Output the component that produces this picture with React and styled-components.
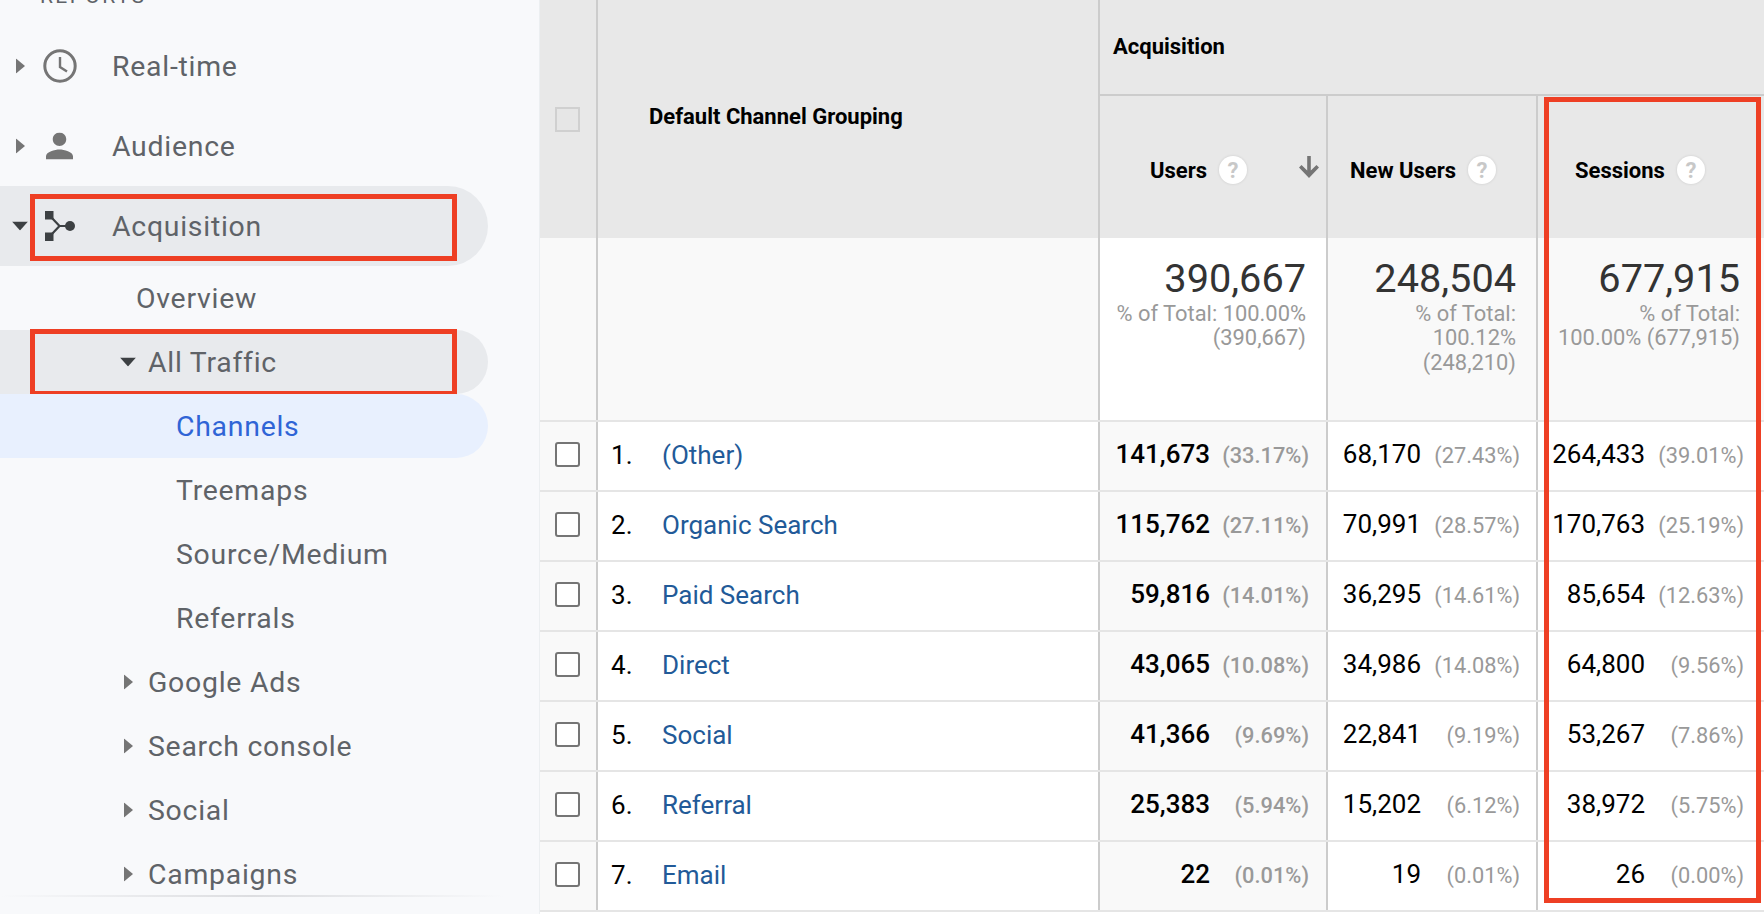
import React from "react";
import styled, { createGlobalStyle } from "styled-components";

const GlobalStyle = createGlobalStyle`
  html, body {
    margin: 0;
    padding: 0;
    height: 914px;
    overflow: hidden;
    background: #fff;
    font-family: Roboto, "Liberation Sans", sans-serif;
  }
`;

const Page = styled.div`
  position: relative;
  display: flex;
  width: 1764px;
  height: 914px;
  overflow: hidden;
`;

const Sidebar = styled.nav`
  position: relative;
  width: 539px;
  flex: none;
  overflow: hidden;
  background: #f8f9fb;
  color: #5f6368;
  font-family: Roboto, sans-serif;
  font-size: 28.4px;
  letter-spacing: 0.75px;
`;

const SectionLabel = styled.div`
  height: 20px;
  margin: -14px 0 20px 40px;
  font-size: 21px;
  line-height: 20px;
  letter-spacing: 2.4px;
`;

const NavRow = styled.div`
  position: relative;
  display: flex;
  align-items: center;
  height: ${(p) => (p.$tall ? 80 : 64)}px;
  width: 488px;
  box-sizing: border-box;
  padding-left: ${(p) => p.$indent}px;
  border-radius: 0 40px 40px 0;
  background: ${(p) => p.$bg || "transparent"};
  color: ${(p) => p.$color || "inherit"};
`;

const Caret = styled.svg`
  position: absolute;
  left: ${(p) => p.$left}px;
  top: 50%;
  transform: translateY(-50%);
  fill: ${(p) => p.$fill || "#757575"};
`;

const NavIcon = styled.svg`
  position: absolute;
  left: ${(p) => p.$left}px;
  top: 50%;
  transform: translateY(-50%);
`;

const RedBox = styled.div`
  position: absolute;
  left: ${(p) => p.$left}px;
  top: ${(p) => p.$top}px;
  width: ${(p) => p.$width}px;
  height: ${(p) => p.$height}px;
  box-sizing: border-box;
  border: 5px solid #ee3f24;
  pointer-events: none;
`;

const SidebarFade = styled.div`
  position: absolute;
  left: 0;
  bottom: 17px;
  width: 504px;
  height: 2px;
  background: linear-gradient(90deg, transparent, #dcdde0 50%, transparent);
`;

const TableArea = styled.div`
  flex: 1;
  min-width: 0;
  border-left: 1px solid #eceff1;
  font-size: 26px;
  color: #000;
`;

const columns = "58px 502px 228px 210px 1fr";

const HeadGrid = styled.div`
  display: grid;
  grid-template-columns: ${columns};
  grid-template-rows: 96px 142px;
  height: 238px;
  background: #e8e8e8;
  font-size: 22px;
  font-weight: 700;
`;

const HeadCell = styled.div`
  position: relative;
  display: flex;
  align-items: center;
  box-sizing: border-box;
  grid-row: ${(p) => p.$row || "auto"};
  grid-column: ${(p) => p.$col || "auto"};
  padding-left: ${(p) => p.$pad || 0}px;
  border-right: ${(p) => (p.$last ? "none" : "2px solid #ccc")};
  border-bottom: ${(p) => (p.$ruled ? "2px solid #ccc" : "none")};
`;

const HeadCheck = styled.span`
  width: 25px;
  height: 25px;
  margin: 1px 0 0 15px;
  box-sizing: border-box;
  border: 2px solid #d0d0d0;
  background: #e6e6e6;
`;

const HeadTitle = styled.span`
  margin-top: ${(p) => p.$shift || 0}px;
`;

const ColumnHead = styled.span`
  display: flex;
  align-items: center;
  margin-top: 6px;
`;

const HelpDot = styled.span`
  display: inline-flex;
  align-items: center;
  justify-content: center;
  width: 28px;
  height: 28px;
  margin-left: 12px;
  border-radius: 50%;
  background: #fff;
  box-shadow: 0 0 3px rgba(0, 0, 0, 0.12);
  color: #c8c8c8;
  font-size: 22px;
  font-weight: 700;
`;

const SortArrow = styled.svg`
  position: absolute;
  right: 7px;
  top: 60px;
  fill: #757575;
`;

const DataRow = styled.div`
  display: grid;
  grid-template-columns: ${columns};
  height: ${(p) => p.$height}px;
  box-sizing: border-box;
  border-bottom: 2px solid #e5e5e5;
`;

const Cell = styled.div`
  display: flex;
  align-items: center;
  box-sizing: border-box;
  padding-bottom: ${(p) => p.$lift || 0}px;
  background: ${(p) => (p.$shade ? "#f9f9f9" : "#fff")};
  border-right: ${(p) => (p.$last ? "none" : "2px solid #ccc")};
`;

const TotalCell = styled(Cell)`
  display: block;
  padding: 18px ${(p) => p.$pad}px 0 0;
  text-align: right;
`;

const TotalValue = styled.div`
  font-size: 39.7px;
  line-height: 46px;
  color: #333;
`;

const TotalNote = styled.div`
  font-size: 21.9px;
  line-height: 24.3px;
  color: #999;
`;

const RowCheck = styled.span`
  width: 25px;
  height: 25px;
  margin: -4px 0 0 15px;
  box-sizing: border-box;
  border: 2px solid #757575;
  border-radius: 3px;
  background: #fff;
`;

const RowIndex = styled.span`
  width: 51px;
  margin-left: 13px;
  color: #000;
`;

const ChannelLink = styled.a`
  color: #225a98;
  text-decoration: none;
`;

const MetricCell = styled(Cell)`
  align-items: baseline;
  justify-content: flex-end;
  padding: 17px ${(p) => p.$pad}px 0 0;
  font-weight: ${(p) => (p.$strong ? 500 : 400)};
`;

const Percent = styled.span`
  width: 99px;
  flex: none;
  text-align: right;
  font-size: 21.8px;
  color: #999;
`;

const ClockIcon = () => (
  <NavIcon $left={43} width="34" height="34" viewBox="0 0 34 34" fill="none" stroke="#757575" strokeWidth="3">
    <circle cx="17" cy="17" r="15.2" />
    <path d="M17 8v10l7 4.5" strokeWidth="2.4" />
  </NavIcon>
);

const PersonIcon = () => (
  <NavIcon $left={46} width="27" height="27" viewBox="4 4 16 16" fill="#757575">
    <path d="M12 12c2.21 0 4-1.79 4-4s-1.79-4-4-4-4 1.79-4 4 1.79 4 4 4zm0 2c-2.67 0-8 1.34-8 4v2h16v-2c0-2.66-5.33-4-8-4z" />
  </NavIcon>
);

const AcquisitionIcon = () => (
  <NavIcon $left={45} width="30" height="30" viewBox="0 0 30 30" fill="#3c4043" stroke="none">
    <rect x="0" y="0" width="8.5" height="8.5" />
    <rect x="0" y="21.5" width="8.5" height="8.5" />
    <circle cx="25" cy="15" r="5" />
    <path d="M6 6l8.5 9L6 24M14 15h9" fill="none" stroke="#3c4043" strokeWidth="2.2" />
  </NavIcon>
);

const RightCaret = ({ left }) => (
  <Caret $left={left} width="9" height="15" viewBox="0 0 9 15">
    <path d="M0 0l9 7.5L0 15z" />
  </Caret>
);

const DownCaret = ({ left, fill }) => (
  <Caret $left={left} $fill={fill} width="16" height="9" viewBox="0 0 16 9">
    <path d="M0 0h16L8 9z" />
  </Caret>
);

const rows = [
  ["(Other)", "141,673", "(33.17%)", "68,170", "(27.43%)", "264,433", "(39.01%)"],
  ["Organic Search", "115,762", "(27.11%)", "70,991", "(28.57%)", "170,763", "(25.19%)"],
  ["Paid Search", "59,816", "(14.01%)", "36,295", "(14.61%)", "85,654", "(12.63%)"],
  ["Direct", "43,065", "(10.08%)", "34,986", "(14.08%)", "64,800", "(9.56%)"],
  ["Social", "41,366", "(9.69%)", "22,841", "(9.19%)", "53,267", "(7.86%)"],
  ["Referral", "25,383", "(5.94%)", "15,202", "(6.12%)", "38,972", "(5.75%)"],
  ["Email", "22", "(0.01%)", "19", "(0.01%)", "26", "(0.00%)"],
];

const totals = [
  { value: "390,667", lines: ["% of Total: 100.00%", "(390,667)"], pad: 20 },
  { value: "248,504", lines: ["% of Total:", "100.12%", "(248,210)"], pad: 20, shade: true },
  { value: "677,915", lines: ["% of Total:", "100.00% (677,915)"], pad: 24, shade: true, last: true },
];

const Help = () => <HelpDot>?</HelpDot>;

export default function App() {
  return (
    <Page>
      <GlobalStyle />
      <Sidebar>
        <SectionLabel>REPORTS</SectionLabel>
        <NavRow $tall $indent={112}>
          <RightCaret left={16} />
          <ClockIcon />
          Real-time
        </NavRow>
        <NavRow $tall $indent={112}>
          <RightCaret left={16} />
          <PersonIcon />
          Audience
        </NavRow>
        <NavRow $tall $indent={112} $bg="#e8eaed">
          <DownCaret left={12} fill="#3c4043" />
          <AcquisitionIcon />
          Acquisition
          <RedBox $left={30} $top={8} $width={427} $height={67} />
        </NavRow>
        <NavRow $indent={136}>Overview</NavRow>
        <NavRow $indent={148} $bg="#e8eaed">
          <DownCaret left={120} fill="#3c4043" />
          All Traffic
          <RedBox $left={30} $top={-1} $width={427} $height={67} />
        </NavRow>
        <NavRow $indent={176} $bg="#e8f0fe" $color="#2f64d6">Channels</NavRow>
        <NavRow $indent={176}>Treemaps</NavRow>
        <NavRow $indent={176}>Source/Medium</NavRow>
        <NavRow $indent={176}>Referrals</NavRow>
        <NavRow $indent={148}>
          <RightCaret left={124} />
          Google Ads
        </NavRow>
        <NavRow $indent={148}>
          <RightCaret left={124} />
          Search console
        </NavRow>
        <NavRow $indent={148}>
          <RightCaret left={124} />
          Social
        </NavRow>
        <NavRow $indent={148}>
          <RightCaret left={124} />
          Campaigns
        </NavRow>
        <SidebarFade />
      </Sidebar>

      <TableArea>
        <HeadGrid>
          <HeadCell $row="1 / span 2">
            <HeadCheck />
          </HeadCell>
          <HeadCell $row="1 / span 2" $pad={51}>
            <HeadTitle $shift={-5}>Default Channel Grouping</HeadTitle>
          </HeadCell>
          <HeadCell $col="3 / span 3" $pad={13} $last $ruled>
            <HeadTitle $shift={-2}>Acquisition</HeadTitle>
          </HeadCell>
          <HeadCell $pad={50}>
            <ColumnHead>
              Users
              <Help />
            </ColumnHead>
            <SortArrow width="20" height="22" viewBox="0 0 20 22">
              <path d="M8.2 0h3.6v14.5l5.7-5.6L20 11.4 10 22 0 11.4l2.5-2.5 5.7 5.6z" />
            </SortArrow>
          </HeadCell>
          <HeadCell $pad={22}>
            <ColumnHead>
              New Users
              <Help />
            </ColumnHead>
          </HeadCell>
          <HeadCell $pad={37} $last>
            <ColumnHead>
              Sessions
              <Help />
            </ColumnHead>
          </HeadCell>
        </HeadGrid>

        <DataRow $height={184}>
          <Cell $shade />
          <Cell $shade />
          {totals.map((t) => (
            <TotalCell key={t.value} $pad={t.pad} $shade={t.shade} $last={t.last}>
              <TotalValue>{t.value}</TotalValue>
              {t.lines.map((line) => (
                <TotalNote key={line}>{line}</TotalNote>
              ))}
            </TotalCell>
          ))}
        </DataRow>

        {rows.map((r, i) => (
          <DataRow key={r[0]} $height={70}>
            <Cell $shade>
              <RowCheck />
            </Cell>
            <Cell $lift={2}>
              <RowIndex>{i + 1}.</RowIndex>
              <ChannelLink>{r[0]}</ChannelLink>
            </Cell>
            <MetricCell $shade $strong $pad={17}>
              {r[1]}
              <Percent>{r[2]}</Percent>
            </MetricCell>
            <MetricCell $pad={16}>
              {r[3]}
              <Percent>{r[4]}</Percent>
            </MetricCell>
            <MetricCell $pad={20} $last>
              {r[5]}
              <Percent>{r[6]}</Percent>
            </MetricCell>
          </DataRow>
        ))}
      </TableArea>

      <RedBox $left={1544} $top={97} $width={217} $height={806} />
    </Page>
  );
}
